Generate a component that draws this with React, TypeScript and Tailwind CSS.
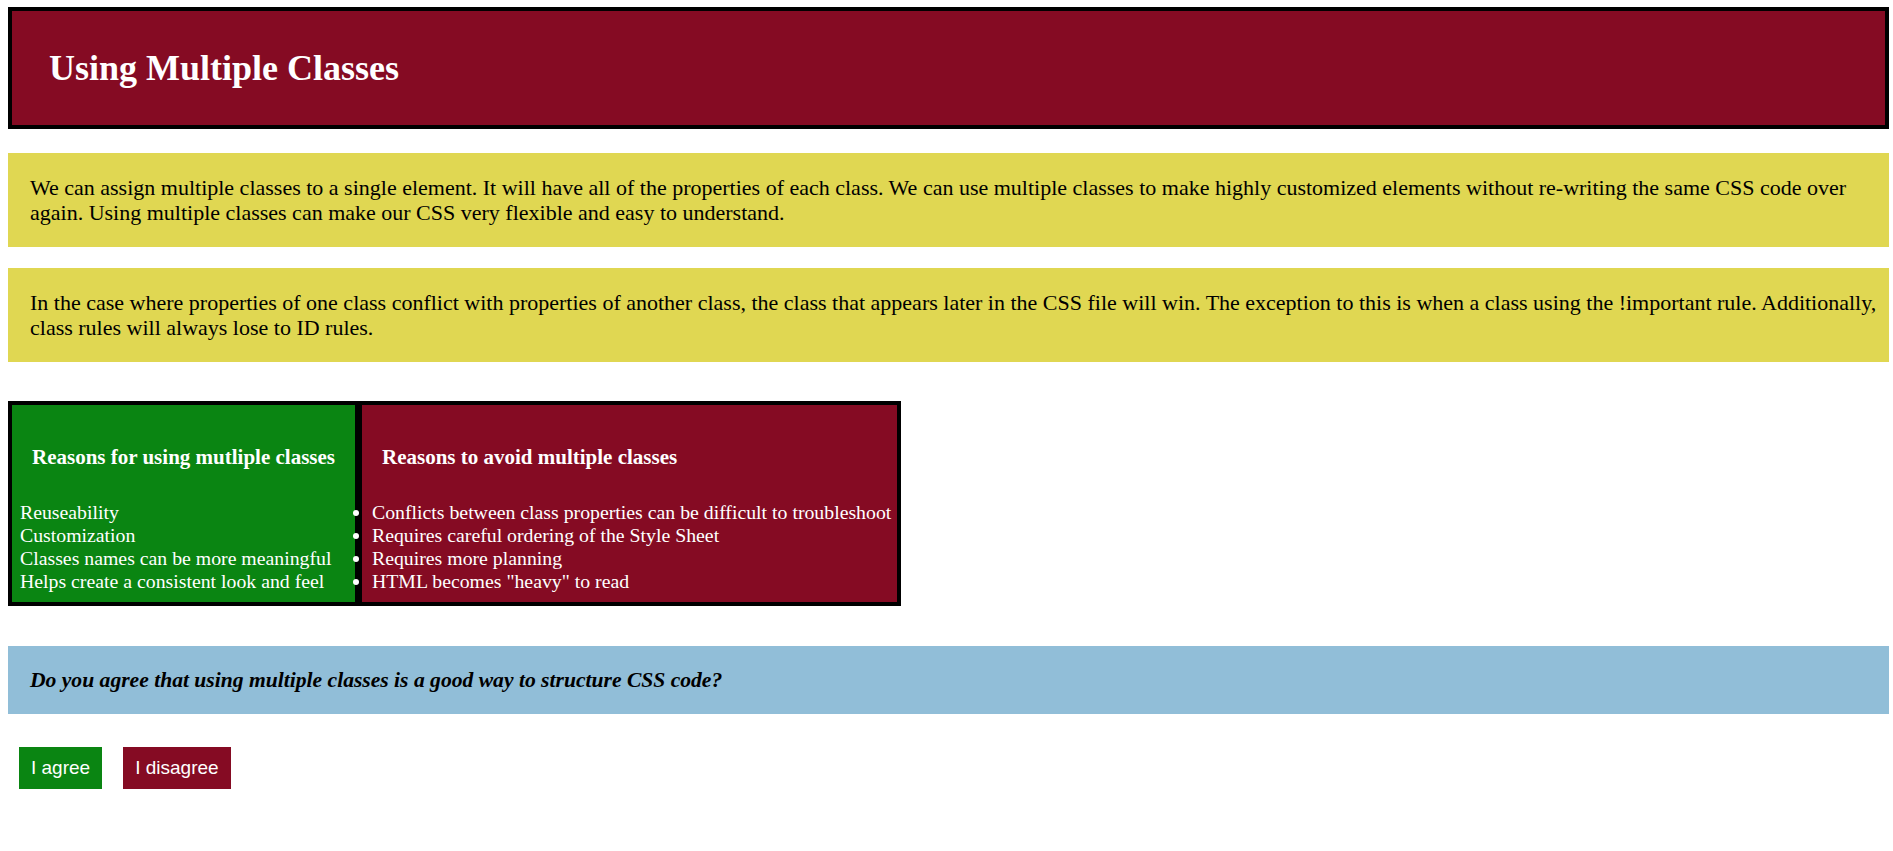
import React from 'react';

const reasonsFor = [
  'Reuseability',
  'Customization',
  'Classes names can be more meaningful',
  'Helps create a consistent look and feel',
];

const reasonsAgainst = [
  'Conflicts between class properties can be difficult to troubleshoot',
  'Requires careful ordering of the Style Sheet',
  'Requires more planning',
  'HTML becomes "heavy" to read',
];

export default function App() {
  return (
    <div className="min-h-screen bg-white pl-[8px] pr-[4px] pt-[7px] pb-[40px] font-['Liberation_Serif',serif] text-black">
      {/* Header */}
      <div className="border-4 border-black bg-[#850b23] h-[122px] flex items-center px-[37px]">
        <h1 className="text-[36px] font-bold text-white leading-none">Using Multiple Classes</h1>
      </div>

      {/* Intro */}
      <div className="mt-[24px] bg-[#e0d752] pl-[22px] pr-[22px] py-[22px] text-[22px] leading-[25px]">
        <p>
          We can assign multiple classes to a single element. It will have all of the properties of each class. We can use
          multiple classes to make highly customized elements without re-writing the same CSS code over again. Using
          multiple classes can make our CSS very flexible and easy to understand.
        </p>
      </div>

      <div className="mt-[21px] bg-[#e0d752] pl-[22px] pr-[3px] py-[22px] text-[22px] leading-[25px]">
        <p>
          In the case where properties of one class conflict with properties of another class, the class that appears later
          in the CSS file will win. The exception to this is when a class using the !important rule. Additionally, class
          rules will always lose to ID rules.
        </p>
      </div>

      {/* Table of reasons */}
      <div className="mt-[39px] inline-flex border-4 border-black text-white">
        <div className="bg-[#0a8512] flex flex-col pb-[9px]">
          <h3 className="pt-[40px] px-[20px] text-[21px] font-bold leading-[24px] whitespace-nowrap">
            Reasons for using mutliple classes
          </h3>
          <ul className="mt-[32px] pl-[8px] pr-[8px] text-[19.8px] leading-[23px] list-none">
            {reasonsFor.map((r) => (
              <li key={r} className="whitespace-nowrap">{r}</li>
            ))}
          </ul>
        </div>
        <div className="bg-[#850b23] border-l-[7px] border-black flex flex-col pb-[9px]">
          <h3 className="pt-[40px] px-[20px] text-[21px] font-bold leading-[24px] whitespace-nowrap">
            Reasons to avoid multiple classes
          </h3>
          <ul className="mt-[32px] pl-[10px] pr-[6px] text-[19.8px] leading-[23px] list-disc list-outside">
            {reasonsAgainst.map((r) => (
              <li key={r} className="whitespace-nowrap">{r}</li>
            ))}
          </ul>
        </div>
      </div>

      {/* Question */}
      <div className="mt-[40px] bg-[#91bed8] h-[68px] flex items-center px-[22px]">
        <p className="text-[21.6px] font-bold italic">Do you agree that using multiple classes is a good way to structure CSS code?</p>
      </div>

      <div className="mt-[33px] flex gap-[21px] pl-[11px] font-['Liberation_Sans',Arial,sans-serif]">
        <button className="bg-[#0a8512] text-white text-[19px] h-[42px] px-[12px]">I agree</button>
        <button className="bg-[#850b23] text-white text-[19px] h-[42px] px-[12px]">I disagree</button>
      </div>
    </div>
  );
}
